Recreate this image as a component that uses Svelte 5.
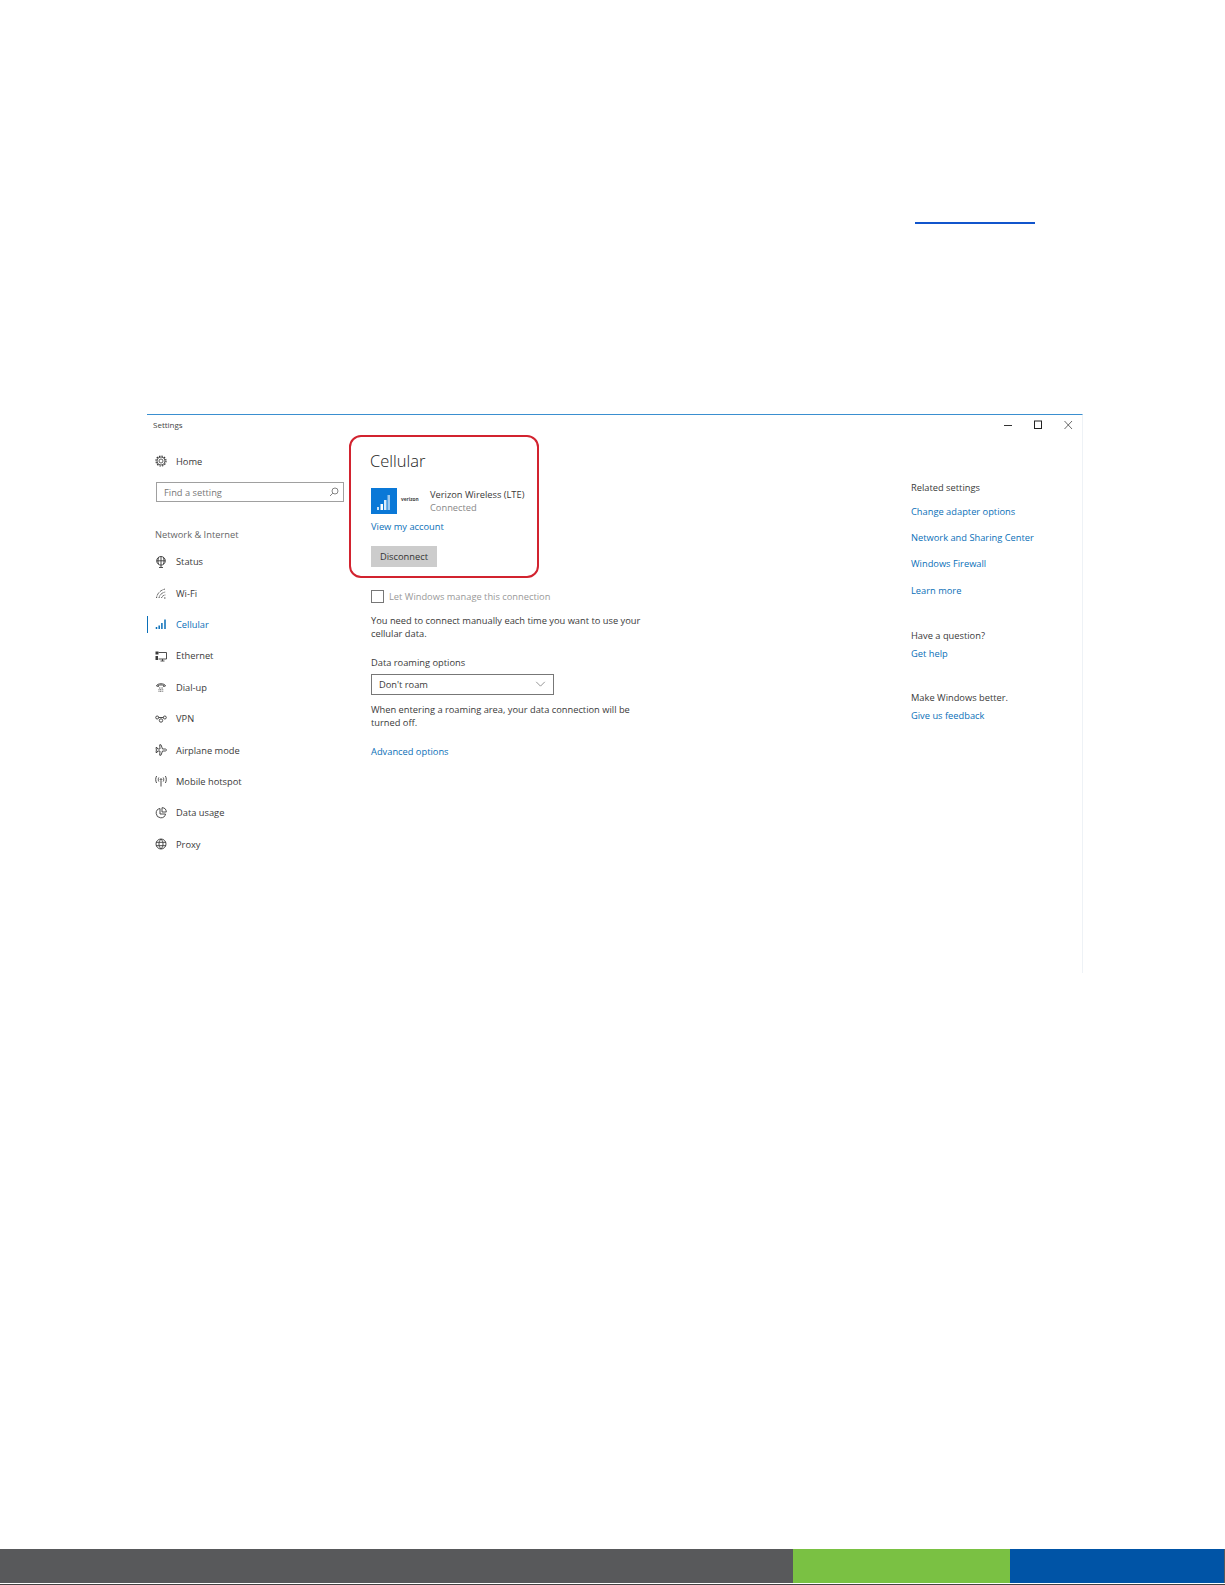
<script>
    const navItems = [
        { id: 'status', label: 'Status' },
        { id: 'wifi', label: 'Wi-Fi' },
        { id: 'cellular', label: 'Cellular', active: true },
        { id: 'ethernet', label: 'Ethernet' },
        { id: 'dialup', label: 'Dial-up' },
        { id: 'vpn', label: 'VPN' },
        { id: 'airplane', label: 'Airplane mode' },
        { id: 'hotspot', label: 'Mobile hotspot' },
        { id: 'usage', label: 'Data usage' },
        { id: 'proxy', label: 'Proxy' }
    ];

    const relatedLinks = ['Change adapter options', 'Network and Sharing Center', 'Windows Firewall', 'Learn more'];
</script>

{#snippet navIcon(id)}
    <svg class="nav-icon" viewBox="0 0 12 12" fill="none" stroke="currentColor" stroke-width="0.9">
        {#if id === 'status'}
            <circle cx="6" cy="4.800" r="4.300" />
            <path d="M1.700 4.800h8.600M6 .5v10.800M3.600 1.400c-.8 2-.8 4.800 0 6.800M8.400 1.400c.8 2 .8 4.800 0 6.800M4 11.500h4" />
        {:else if id === 'wifi'}
            <path d="M1.500 11c.6-4.500 4-8 8.800-9M4 11c.4-2.800 2.600-5.200 6.300-6M6.500 11c.3-1.400 1.600-2.700 3.800-3" stroke-dasharray="1 .5" />
            <path d="M9 11h1.500" />
        {:else if id === 'cellular'}
            <path d="M1.500 9v2M4.200 7.500V11M6.900 5v6M10 1.500V11" stroke-width="1.500" />
        {:else if id === 'ethernet'}
            <path d="M3.500 2.500h8v6.500h-8M5.500 11h4M7.500 9v2" />
            <path d="M.5 1.500h3v3h-3zM.5 6h2.500v4H.5z" fill="currentColor" stroke="none" />
        {:else if id === 'dialup'}
            <path d="M1.500 5c.6-3 8.400-3 9 0L8.500 5.500V4.300c-1.500-.5-3.500-.5-5 0v1.200z" />
            <path d="M4 7h4M3.500 8.700h5M3.500 10.300h5" stroke-dasharray="1 .6" stroke-width="0.8" />
        {:else if id === 'vpn'}
            <circle cx="2.200" cy="4.500" r="1.500" />
            <circle cx="9.800" cy="4.500" r="1.500" />
            <circle cx="6" cy="7.500" r="1.700" />
            <path d="M3.500 4.500h5" />
        {:else if id === 'airplane'}
            <path d="M11.500 6c0-.6-.7-1-1.500-1H7.500L6 .8H4.700L5 5H2.700L2 3.500H1L1.400 6 1 8.500h1L2.700 7H5l-.3 4.200H6L7.500 7H10c.8 0 1.500-.4 1.500-1z" />
        {:else if id === 'hotspot'}
            <path d="M6 6v5.500" />
            <circle cx="6" cy="4.500" r=".8" />
            <path d="M3.800 2.500c-.7 1.300-.7 2.700 0 4M8.200 2.500c.7 1.300.7 2.700 0 4M1.600 1c-1.200 2.300-1.200 4.700 0 7M10.400 1c1.200 2.300 1.200 4.700 0 7" />
        {:else if id === 'usage'}
            <path d="M5 1.500a4.700 4.700 0 1 0 5.500 5.500H5z" />
            <path d="M7 .7v4.300h4.300A4.400 4.400 0 0 0 7 .7z" />
        {:else if id === 'proxy'}
            <circle cx="6" cy="6" r="5" />
            <path d="M1 4.300h10M1 7.700h10M6 1c-2.700 2.800-2.700 7.200 0 10M6 1c2.700 2.800 2.700 7.200 0 10" />
        {/if}
    </svg>
{/snippet}

<div class="page">
    <div class="doc-link"></div>

    <section class="window">
        <header class="titlebar">
            <span>Settings</span>
            <div class="controls">
                <svg viewBox="0 0 10 10" fill="none" stroke="#333"><path d="M1 5.500h8" /></svg>
                <svg viewBox="0 0 10 10" fill="none" stroke="#222"><rect x="1.500" y="1" width="7" height="7.500" /></svg>
                <svg viewBox="0 0 10 10" fill="none" stroke="#444" stroke-width="0.8"><path d="M1.500 1l7.500 8M9 1L1.500 9" /></svg>
            </div>
        </header>

        <div class="body">
            <aside class="sidebar">
                <div class="home">
                    <svg class="nav-icon" viewBox="0 0 12 12" fill="none" stroke="currentColor" stroke-width="0.8">
                        <circle cx="6" cy="6" r="2" />
                        <circle cx="6" cy="6" r="4" />
                        <circle cx="6" cy="6" r="5" stroke-dasharray="1.500 1.100" stroke-width="1.200" />
                    </svg>
                    <span>Home</span>
                </div>
                <div class="search">
                    <span>Find a setting</span>
                    <svg viewBox="0 0 10 10" fill="none" stroke="#666" stroke-width="0.8">
                        <circle cx="6" cy="4" r="3" />
                        <path d="M3.800 6.200L1 9" />
                    </svg>
                </div>
                <h2>Network &amp; Internet</h2>
                <ul>
                    {#each navItems as item}
                        <li class:active={item.active}>
                            {@render navIcon(item.id)}
                            <span>{item.label}</span>
                        </li>
                    {/each}
                </ul>
            </aside>

            <main class="content">
                <div class="callout">
                    <h1>Cellular</h1>
                    <div class="carrier">
                        <div class="tile">
                            <svg viewBox="0 0 26 26" fill="#fff">
                                <rect x="6" y="19" width="2" height="3" opacity=".8" />
                                <rect x="9.500" y="16" width="2.500" height="6" />
                                <rect x="13" y="12" width="2.500" height="10" opacity=".85" />
                                <rect x="16.500" y="7" width="2.500" height="15" opacity=".6" />
                            </svg>
                        </div>
                        <span class="logo">verizon</span>
                        <div class="carrier-text">
                            <div>Verizon Wireless (LTE)</div>
                            <div class="muted">Connected</div>
                        </div>
                    </div>
                    <a class="link account" href="#top">View my account</a>
                    <button>Disconnect</button>
                </div>

                <label class="check">
                    <span class="box"></span>
                    <span>Let Windows manage this connection</span>
                </label>
                <p class="manual">You need to connect manually each time you want to use your<br />cellular data.</p>

                <div class="field-label">Data roaming options</div>
                <div class="select">
                    <span>Don't roam</span>
                    <svg viewBox="0 0 12 7" fill="none" stroke="#777" stroke-width="0.9"><path d="M1 1l5 5 5-5" /></svg>
                </div>
                <p class="roaming">When entering a roaming area, your data connection will be<br />turned off.</p>
                <a class="link advanced" href="#top">Advanced options</a>
            </main>

            <aside class="related">
                <h3>Related settings</h3>
                <div class="related-links">
                    {#each relatedLinks as text}
                        <a class="link" href="#top">{text}</a>
                    {/each}
                </div>
                <h3 class="question">Have a question?</h3>
                <a class="link" href="#top">Get help</a>
                <h3 class="better">Make Windows better.</h3>
                <a class="link" href="#top">Give us feedback</a>
            </aside>
        </div>
    </section>

    <footer>
        <div class="gray"></div>
        <div class="green"></div>
        <div class="blue"></div>
    </footer>
</div>

<style>
    :global(body) {
        background: #fff;
    }

    .page {
        min-height: 1585px;
        display: flex;
        flex-direction: column;
        font-family: "Open Sans", "Liberation Sans", sans-serif;
        font-size: 9.3px;
        color: #3a3a3a;
        box-sizing: border-box;
        padding-top: 222px;
        border-bottom: 1px solid #444;
    }

    .doc-link {
        width: 120px;
        height: 2px;
        margin-left: 915px;
        background: #1155cc;
    }

    .window {
        width: 936px;
        height: 559px;
        margin: 190px 0 0 147px;
        box-sizing: border-box;
        border-top: 1px solid #3a8fd0;
        border-right: 1px solid #eef2f6;
    }

    .titlebar {
        height: 18px;
        display: flex;
        justify-content: space-between;
        align-items: center;
        padding-left: 6px;
        font-size: 8px;
        color: #444;
    }

    .controls {
        display: flex;
        gap: 20px;
        padding: 2px 9px 0 0;
    }

    .controls svg {
        width: 10px;
        height: 10px;
    }

    .body {
        display: grid;
        grid-template-columns: 224px 540px 1fr;
    }

    .nav-icon {
        width: 12px;
        height: 12px;
        flex: none;
    }

    .home {
        height: 20px;
        margin-top: 18px;
        padding-left: 8px;
        display: flex;
        align-items: center;
        gap: 9px;
    }

    .search {
        width: 188px;
        height: 20px;
        margin: 11px 0 0 9px;
        box-sizing: border-box;
        border: 1.5px solid #a0a0a0;
        display: flex;
        justify-content: space-between;
        align-items: center;
        padding: 0 4px 0 7px;
        color: #777;
    }

    .search svg {
        width: 10px;
        height: 10px;
    }

    h2 {
        margin: 23px 0 0 8px;
        font-size: 9.3px;
        line-height: 20px;
        font-weight: 400;
        color: #666;
    }

    ul {
        list-style: none;
        margin: 1px 0 0;
        padding: 0;
    }

    li {
        height: 31.4px;
        display: flex;
        align-items: center;
        gap: 9px;
        padding-left: 8px;
        box-sizing: border-box;
        position: relative;
    }

    li.active {
        color: #0a6fb8;
    }

    li.active::before {
        content: "";
        position: absolute;
        left: 0;
        top: 7px;
        width: 1px;
        height: 17px;
        background: #0a6fb8;
    }

    .callout {
        width: 190px;
        height: 143px;
        margin: 2px 0 0 -22px;
        box-sizing: border-box;
        border: 2px solid #d2232f;
        border-radius: 12px;
        padding: 0 0 0 20px;
    }

    h1 {
        margin: 11px 0 0 -1px;
        font-size: 16.5px;
        line-height: 26px;
        font-weight: 300;
        color: #222;
    }

    .carrier {
        display: flex;
        align-items: center;
        margin-top: 14px;
    }

    .tile {
        width: 26px;
        height: 26px;
        background: #0a78d7;
    }

    .tile svg {
        display: block;
    }

    .logo {
        width: 29px;
        padding: 0 0 4px 4px;
        font-size: 4.800px;
        font-weight: 700;
        color: #444;
    }

    .carrier-text {
        line-height: 13px;
    }

    .muted {
        color: #888;
    }

    .link {
        display: block;
        color: #0a6fb8;
        text-decoration: none;
    }

    .account {
        margin-top: 6px;
        line-height: 14px;
    }

    button {
        display: block;
        margin-top: 12px;
        width: 66px;
        height: 21px;
        padding: 0;
        border: none;
        background: #ccc;
        color: #333;
        font: inherit;
    }

    .check {
        display: flex;
        align-items: center;
        gap: 5px;
        margin-top: 12px;
        color: #999;
    }

    .box {
        width: 13px;
        height: 13px;
        box-sizing: border-box;
        border: 1px solid #777;
    }

    p {
        margin: 0;
        line-height: 13.4px;
    }

    .manual {
        margin-top: 11px;
    }

    .field-label {
        margin-top: 15px;
        line-height: 14px;
    }

    .select {
        width: 183px;
        height: 21px;
        margin-top: 4px;
        box-sizing: border-box;
        border: 1px solid #777;
        display: flex;
        justify-content: space-between;
        align-items: center;
        padding: 0 7px 0 7px;
    }

    .select svg {
        width: 11px;
        height: 6px;
    }

    .roaming {
        margin-top: 8px;
    }

    .advanced {
        margin-top: 15px;
    }

    .related {
        padding-top: 48px;
    }

    h3 {
        margin: 0;
        font-size: 9.3px;
        line-height: 14px;
        font-weight: 400;
    }

    .related .link {
        line-height: 14px;
    }

    .related-links {
        margin-top: 10px;
        display: grid;
        grid-auto-rows: 14px;
        row-gap: 12.200px;
    }

    .question {
        margin-top: 31px;
    }

    .better {
        margin-top: 30px;
    }

    .question + .link,
    .better + .link {
        margin-top: 4px;
    }

    footer {
        margin-top: auto;
        margin-bottom: 1px;
        height: 34px;
        display: grid;
        grid-template-columns: 793px 217px 1fr;
    }

    .gray {
        background: #58595b;
    }

    .green {
        background: #7ac143;
    }

    .blue {
        background: #0054a6;
        border-right: 1px solid #58595b;
    }
</style>
